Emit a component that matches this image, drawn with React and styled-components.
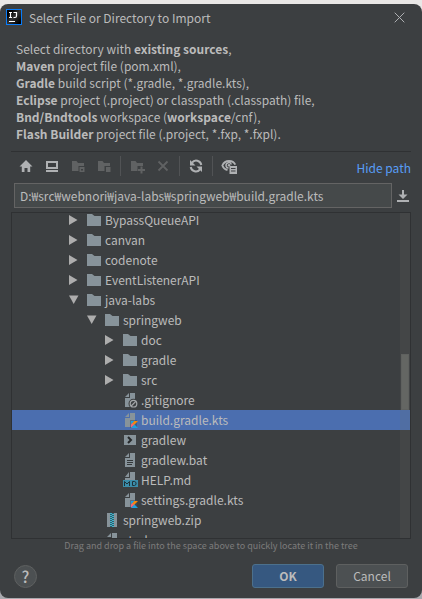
import React from 'react';
import styled, { createGlobalStyle, css } from 'styled-components';

const GlobalStyle = createGlobalStyle`
  * { box-sizing: border-box; }
  body {
    margin: 0;
    background: linear-gradient(#e9e7e6 50%, #a9a9ae 50%);
    font-family: "Noto Sans CJK KR", sans-serif;
    font-size: 12px;
    line-height: 17px;
    color: #bbbbbb;
  }
  button, input { font: inherit; color: inherit; margin: 0; }
  svg { display: block; flex: none; }
`;

const Page = styled.div`
  min-height: 100vh;
  padding: 4px 0 1px;
  display: flex;
`;

const Dialog = styled.main`
  flex: 1;
  min-width: 0;
  display: flex;
  flex-direction: column;
  background: #3c3f41;
  border-radius: 8px;
  overflow: hidden;
`;

const TitleBar = styled.header`
  display: flex;
  align-items: center;
  gap: 7px;
  height: 26px;
  padding: 0 17px 0 6px;
`;

const Title = styled.h1`
  flex: 1;
  margin: 0;
  font-size: 12px;
  font-weight: 400;
`;

const PlainButton = styled.button`
  display: flex;
  padding: 0;
  border: 0;
  background: none;
  color: #afb1b3;
  &:disabled { color: #606263; }
`;

const Description = styled.p`
  margin: 0;
  padding: 10px 16px 9px;
  white-space: nowrap;
`;

const Content = styled.div`
  flex: 1;
  display: flex;
  flex-direction: column;
  margin: 0 11px;
  border-top: 1px solid #2f3133;
`;

const Toolbar = styled.div`
  display: flex;
  align-items: center;
  height: 31px;
  padding-left: 7px;
`;

const Tools = styled.div`
  display: flex;
  align-items: center;
  gap: 10px;
  padding-bottom: 3px;
`;

const Divider = styled.span`
  width: 1px;
  height: 20px;
  margin: 0 -2px;
  background: #515355;
`;

const HidePath = styled.a`
  margin-left: auto;
  color: #589df6;
  text-decoration: none;
`;

const PathRow = styled.div`
  display: flex;
  align-items: center;
  gap: 4px;
  padding: 0 1px 0 3px;
`;

const PathInput = styled.input`
  flex: 1;
  min-width: 0;
  height: 25px;
  padding: 0 5px;
  border: 1px solid #646464;
  border-radius: 0;
  background: #45494a;
  outline: none;
`;

const TreePane = styled.section`
  display: flex;
  height: 327px;
  margin-top: 4px;
  border: 1px solid #2f3133;
  overflow: hidden;
  position: relative;
`;

const TreeList = styled.ul`
  flex: 1;
  margin: -3px 0 0;
  padding: 0;
  list-style: none;
`;

const TreeRow = styled.li`
  display: flex;
  align-items: center;
  height: 20px;
  padding-left: ${({ $level }) => 57 + $level * 18}px;
  white-space: nowrap;
  ${({ $selected }) => $selected && css`background: #4b6eaf;`}
`;

const Slot = styled.span`
  display: flex;
  width: ${({ $width }) => $width}px;
`;

const Label = styled.span`
  padding-bottom: 1px;
`;

const ScrollTrack = styled.div`
  position: absolute;
  top: 0;
  right: 0;
  bottom: 0;
  width: 10px;
  padding: 141px 1px 0;
  background: rgba(110, 112, 105, 0.16);
`;

const ScrollThumb = styled.div`
  height: 56px;
  background: #646663;
  border: 1px solid #5f615f;
`;

const Hint = styled.p`
  margin: 0;
  font-size: 9px;
  line-height: 14px;
  text-align: center;
  color: #7c7c7c;
`;

const Footer = styled.footer`
  display: flex;
  align-items: center;
  gap: 12px;
  margin-top: auto;
  padding: 0 3px 10px;
`;

const HelpButton = styled.button`
  width: 23px;
  height: 23px;
  margin-right: auto;
  padding: 0;
  border: 1px solid #5e6060;
  border-radius: 50%;
  background: #4c5052;
  font-size: 16px;
  line-height: 20px;
  font-weight: 500;
`;

const ActionButton = styled.button`
  width: 72px;
  height: 24px;
  padding: 0;
  border: 1px solid ${({ $primary }) => ($primary ? '#4c708c' : '#5e6060')};
  border-radius: 3px;
  background: ${({ $primary }) => ($primary ? '#365880' : '#4c5052')};
  font-weight: ${({ $primary }) => ($primary ? 700 : 400)};
  line-height: 20px;
`;

const Icon = ({ children, size = 16 }) => (
  <svg width={size} height={size} viewBox={`0 0 ${size} ${size}`} fill="currentColor" aria-hidden="true">
    {children}
  </svg>
);

const AppLogo = () => (
  <Icon>
    <defs>
      <linearGradient id="logo" x2="1" y2="1">
        <stop offset="0.2" stopColor="#000" />
        <stop offset="0.5" stopColor="#333" />
        <stop offset="0.9" stopColor="#000" />
      </linearGradient>
    </defs>
    <path fill="#087cfa" d="M0 0h16v16H0z" />
    <path fill="url(#logo)" d="M1 1h14v14H1z" />
    <path stroke="#fff" strokeWidth="1.200" fill="none" d="M3 3.500h3M4.500 3v6M3 8.500h3M7.500 3.500h3V7q0 1.500-1.500 1.500H7.500M3 12.500h6" />
  </Icon>
);

const CloseIcon = () => (
  <Icon size={11}><path d="M.7.7l9.600 9.600M10.300.7L.7 10.300" stroke="currentColor" /></Icon>
);

const HomeIcon = () => <Icon><path d="M8 2l6.500 6.500h-2.300V14H9.500v-4h-3v4H3.800V8.500H1.500z" /></Icon>;

const DesktopIcon = () => (
  <Icon><path fillRule="evenodd" d="M2 3h12v8H2zM4 5v4h8V5zM2 12h12v2H2z" /></Icon>
);

const SMALL_FOLDER = 'M2 3h4.500l1.500 2H14v3H8.500v5H2z';
const ProjectFolderIcon = () => (
  <Icon><path fillRule="evenodd" d={`${SMALL_FOLDER}M9.500 9h5v5h-5zM11 11v1.500h2V11z`} /></Icon>
);
const ModuleFolderIcon = () => <Icon><path d={`${SMALL_FOLDER}M10 9h4.500v5H10z`} /></Icon>;
const NewFolderIcon = () => (
  <Icon><path d={`${SMALL_FOLDER}M11.500 8.500h2V11H16v2h-2.500v2.500h-2V13H9v-2h2.500z`} /></Icon>
);
const DeleteIcon = () => (
  <Icon><path d="M3.500 3.500l9 9M12.500 3.500l-9 9" stroke="currentColor" strokeWidth="1.800" /></Icon>
);

const RefreshIcon = () => (
  <Icon>
    <g fill="none" stroke="currentColor" strokeWidth="2">
      <path d="M13.300 7A5.200 5.200 0 0 0 4 4.700" />
      <path d="M2.700 9a5.200 5.200 0 0 0 9.300 2.300" />
    </g>
    <path d="M2 2v5.500h5.500zM14 14V8.500H8.500z" />
  </Icon>
);

const ShowHiddenIcon = () => (
  <Icon>
    <path fill="none" stroke="currentColor" strokeWidth="1.800" d="M6.500 12C3.500 11.300 1.800 9 1.300 7.500 2.500 4.800 4.800 3 8 3s5.300 1.500 6.300 3.700" />
    <path fill="none" stroke="currentColor" strokeWidth="1.500" d="M7.500 10A2.700 2.700 0 1 1 10.300 6.500" />
    <circle cx="8" cy="7.300" r="1.200" />
    <path fillRule="evenodd" d="M8.500 8H16v8H8.500zM10 10v1h4.500v-1zM10 12.500v1h4.500v-1z" />
  </Icon>
);

const DownloadIcon = () => (
  <svg width="14" height="14" viewBox="0 0 14 14" fill="currentColor" aria-hidden="true">
    <path d="M6 1h2v4.500h3.500L7 10 2.500 5.500H6zM1 11h12v2H1z" />
  </svg>
);

const Arrow = ({ open }) => (
  <Icon size={10}>
    <path fill="#adadad" d={open ? 'M0 .5h9.500L4.700 9z' : 'M0 0l8.500 5L0 10z'} />
  </Icon>
);

const FolderIcon = () => <Icon><path fill="#87939a" d="M1 2h5l2.500 2H15v10H1z" /></Icon>;

const FilePage = ({ children }) => (
  <Icon>
    <path fill="#87939a" d="M7 1v4H3zM8 1h5v14H3V6h5z" />
    {children}
  </Icon>
);

const IgnoredIcon = () => (
  <FilePage>
    <circle cx="11.500" cy="11.700" r="5" fill="#3c3f41" />
    <circle cx="11.500" cy="11.700" r="3.300" fill="none" stroke="#a5a8aa" strokeWidth="1.200" />
    <path d="M9.200 14l4.600-4.600" stroke="#a5a8aa" strokeWidth="1.200" />
  </FilePage>
);

const KotlinIcon = () => (
  <FilePage>
    <path fill="#3c4f68" d="M8 8h7v8H8z" opacity="0.55" />
    <path fill="#1ba1e2" d="M9 9h3.500L9 12.500z" />
    <path fill="#f88909" d="M12.500 9H16l-5 5-2-1.500z" />
    <path fill="#f0657a" d="M9 12.500V16l3-3-1.500-2z" />
    <path fill="#1ba1e2" d="M12.500 12.500L16 16H9z" />
  </FilePage>
);

const ShellIcon = () => (
  <Icon>
    <path fill="#87939a" d="M2 3h12v10H2z" />
    <path fill="none" stroke="#25282a" strokeWidth="2" d="M6 5l3 3-3 3" />
  </Icon>
);

const TextIcon = () => (
  <FilePage><path stroke="#34383a" d="M5 8.500h6M5 10.500h6M5 12.500h5" /></FilePage>
);

const MarkdownIcon = () => (
  <Icon>
    <path fill="#87939a" d="M7 0v5H3zM8 0h5v8H3V6h5z" />
    <path fill="#3b8daa" d="M1 8h15v7H1z" />
    <path fill="none" stroke="#1e3139" d="M2.500 14V9.500L5 12l2.500-2.500V14M10.500 9.500v4h2l1.500-1v-2l-1.500-1z" />
  </Icon>
);

const ArchiveIcon = () => (
  <Icon>
    <path fill="#87939a" d="M3 1h3v14H3zM10 1h3v14h-3z" />
    <path fill="#345c68" d="M6 1h4v14H6z" />
    <path stroke="#40b6d0" strokeWidth="2" strokeDasharray="1 1" d="M7 1v14" />
    <path stroke="#40b6d0" strokeWidth="2" strokeDasharray="1 1" d="M9 2v13" />
  </Icon>
);

const ICONS = {
  folder: FolderIcon,
  ignored: IgnoredIcon,
  kotlin: KotlinIcon,
  shell: ShellIcon,
  text: TextIcon,
  markdown: MarkdownIcon,
  archive: ArchiveIcon,
  file: FilePage,
};

const NODES = [
  { name: 'BypassQueueAPI', level: 0, icon: 'folder' },
  { name: 'canvan', level: 0, icon: 'folder' },
  { name: 'codenote', level: 0, icon: 'folder' },
  { name: 'EventListenerAPI', level: 0, icon: 'folder' },
  { name: 'java-labs', level: 0, icon: 'folder', open: true },
  { name: 'springweb', level: 1, icon: 'folder', open: true },
  { name: 'doc', level: 2, icon: 'folder' },
  { name: 'gradle', level: 2, icon: 'folder' },
  { name: 'src', level: 2, icon: 'folder' },
  { name: '.gitignore', level: 2, icon: 'ignored' },
  { name: 'build.gradle.kts', level: 2, icon: 'kotlin', selected: true },
  { name: 'gradlew', level: 2, icon: 'shell' },
  { name: 'gradlew.bat', level: 2, icon: 'text' },
  { name: 'HELP.md', level: 2, icon: 'markdown' },
  { name: 'settings.gradle.kts', level: 2, icon: 'kotlin' },
  { name: 'springweb.zip', level: 1, icon: 'archive' },
  { name: 'study', level: 1, icon: 'file' },
];

const TreeNode = ({ name, level, icon, open, selected }) => {
  const NodeIcon = ICONS[icon];
  return (
    <TreeRow $level={level} $selected={selected} role="treeitem" aria-selected={!!selected}>
      <Slot $width={17}>{icon === 'folder' && <Arrow open={open} />}</Slot>
      <Slot $width={19}><NodeIcon /></Slot>
      <Label>{name}</Label>
    </TreeRow>
  );
};

const TOOLS = [
  { label: 'Home', icon: HomeIcon },
  { label: 'Desktop', icon: DesktopIcon },
  { label: 'Project directory', icon: ProjectFolderIcon, disabled: true },
  { label: 'Module directory', icon: ModuleFolderIcon, disabled: true },
  null,
  { label: 'New folder', icon: NewFolderIcon, disabled: true },
  { label: 'Delete', icon: DeleteIcon, disabled: true },
  null,
  { label: 'Refresh', icon: RefreshIcon },
  null,
  { label: 'Show hidden files', icon: ShowHiddenIcon },
];

export default function App() {
  return (
    <Page>
      <GlobalStyle />
      <Dialog>
        <TitleBar>
          <AppLogo />
          <Title>Select File or Directory to Import</Title>
          <PlainButton aria-label="Close"><CloseIcon /></PlainButton>
        </TitleBar>
        <Description>
          Select directory with <b>existing sources</b>,<br />
          <b>Maven</b> project file (pom.xml),<br />
          <b>Gradle</b> build script (*.gradle, *.gradle.kts),<br />
          <b>Eclipse</b> project (.project) or classpath (.classpath) file,<br />
          <b>Bnd/Bndtools</b> workspace (<b>workspace</b>/cnf),<br />
          <b>Flash Builder</b> project file (.project, *.fxp, *.fxpl).
        </Description>
        <Content>
          <Toolbar>
            <Tools>
              {TOOLS.map((tool, i) =>
                tool ? (
                  <PlainButton key={tool.label} aria-label={tool.label} disabled={tool.disabled}>
                    <tool.icon />
                  </PlainButton>
                ) : (
                  <Divider key={i} />
                ),
              )}
            </Tools>
            <HidePath href="#path">Hide path</HidePath>
          </Toolbar>
          <PathRow>
            <PathInput id="path" aria-label="Path" defaultValue="D:₩src₩webnori₩java-labs₩springweb₩build.gradle.kts" />
            <PlainButton aria-label="Recent paths"><DownloadIcon /></PlainButton>
          </PathRow>
          <TreePane>
            <TreeList role="tree" aria-label="Files">
              {NODES.map((node) => <TreeNode key={node.name} {...node} />)}
            </TreeList>
            <ScrollTrack><ScrollThumb /></ScrollTrack>
          </TreePane>
          <Hint>Drag and drop a file into the space above to quickly locate it in the tree</Hint>
          <Footer>
            <HelpButton aria-label="Help">?</HelpButton>
            <ActionButton $primary>OK</ActionButton>
            <ActionButton>Cancel</ActionButton>
          </Footer>
        </Content>
      </Dialog>
    </Page>
  );
}
